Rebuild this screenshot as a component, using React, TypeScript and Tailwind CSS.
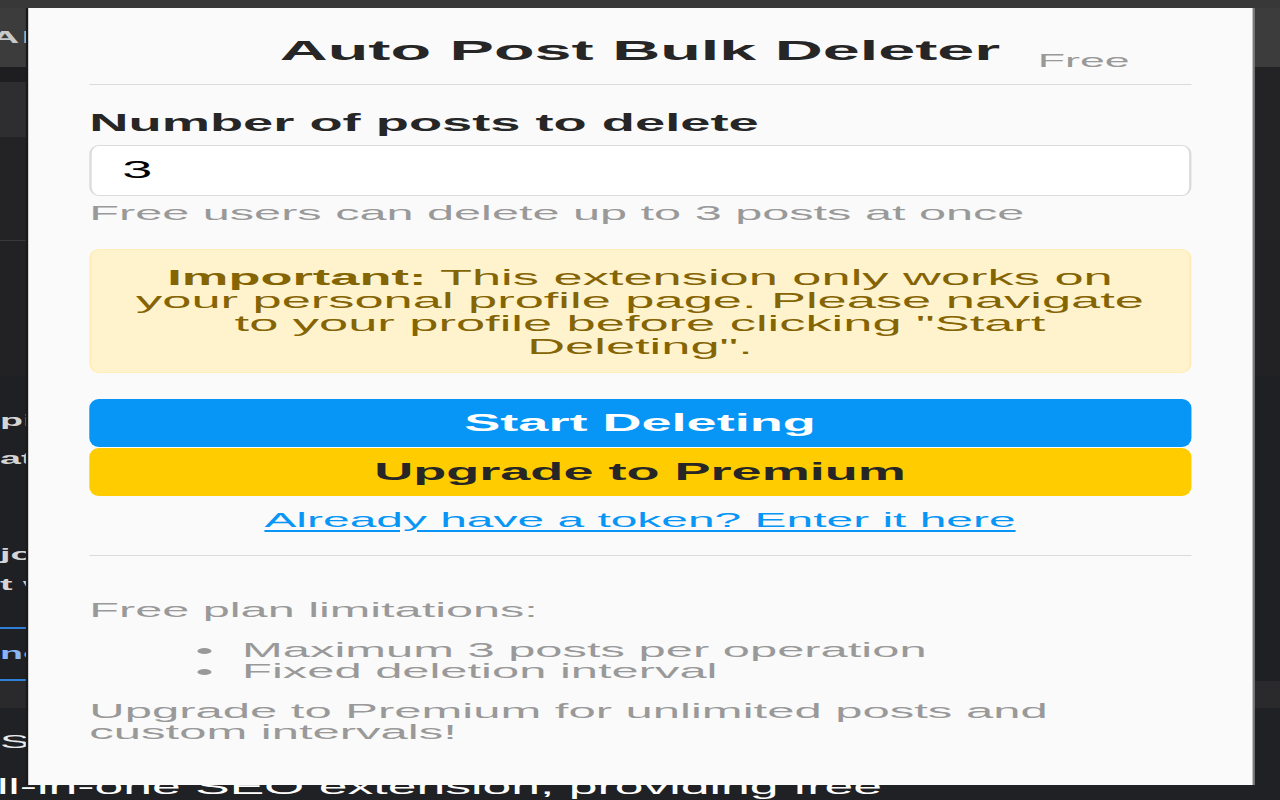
import React from 'react';

// The reference is a popup captured at a stretched aspect ratio, so the whole
// page is laid out at a narrow width and stretched horizontally.
const limits = ['Maximum 3 posts per operation', 'Fixed deletion interval'];

function BackdropPage() {
  return (
    <div className="flex h-[800px] flex-col bg-[#202124] text-[#e8eaed]">
      <div className="h-[8px] bg-[#383838]" />
      <div className="flex h-[60px] items-center bg-[#3c3c3c] text-[17px] font-bold tracking-[1px] text-[#c9c9c9]">
        <span className="-ml-[4px]">AP</span>
      </div>
      <div className="flex h-[70px] bg-[#232326]">
        <div className="w-[200px] bg-[#1e1e20] pt-[15px]">
          <div className="h-[55px] bg-[#2e2e30]" />
        </div>
      </div>
      <div className="h-[105px] bg-[#232326]">
        <div className="h-full w-[200px] border-b border-[#3a3a3c]" />
      </div>
      <div className="h-[136px] bg-[#222225]" />
      <div className="flex h-[253px] flex-col bg-[#1f2023] pt-[26px] text-[16px] font-bold leading-[38px] text-[#d5d5d5]">
        <span>pinned</span>
        <span>at the</span>
        <span className="mt-[58px]">jobs</span>
        <span className="-mt-[8px]">t with</span>
      </div>
      <div className="h-[55px] bg-[#1f2023]">
        <div className="flex h-full w-[200px] items-center border-y-2 border-[#2f7fd6] text-[16px] font-bold text-[#8ab4f8]">
          <span>nc</span>
        </div>
      </div>
      <div className="h-[27px] bg-[#2a2a2c]" />
      <div className="flex h-[70px] items-center bg-[#202124] text-[19px] text-[#e8eaed]">
        <span>SEO</span>
      </div>
      <div className="-mt-[3px] text-[22px] leading-[26px] whitespace-nowrap text-white">
        <span className="-ml-[16px]">All-in-one SEO extension, providing free</span>
      </div>
    </div>
  );
}

function Popup() {
  return (
    <div className="absolute top-[8px] left-[11.5px] flex h-[777px] w-[521.7px] flex-col bg-[#fafafa] px-[26.5px] pt-[26px] shadow-[1px_0_0_#7a7a7a,-1px_0_0_#1a1a1a]">
      <div className="relative border-b border-[#dbdbdb] pb-[18px]">
        <h1 className="text-center text-[28.3px] leading-[32px] font-bold text-[#262626]">Auto Post Bulk Deleter</h1>
        <span className="absolute top-[17px] right-[26px] text-[19px] leading-[19px] text-[#999999]">Free</span>
      </div>

      <label className="mt-[25px] block text-[23.1px] leading-[27px] font-bold text-[#262626]">Number of posts to delete</label>
      <input
        className="mt-[8px] h-[51px] w-full rounded-[4px/9px] border border-[#dbdbdb] bg-white pl-[13px] text-[23px] text-black outline-none"
        defaultValue="3"
        type="text"
      />
      <p className="mt-[5px] text-[20.7px] leading-[24px] text-[#999999]">Free users can delete up to 3 posts at once</p>

      <div className="mt-[24px] rounded-[4px/9px] border border-[#ffeeba] bg-[#fff3cd] pt-[16px] pb-[14px] text-center text-[22.3px] leading-[23px] text-[#856404]">
        <strong>Important:</strong> This extension only works on
        <br />
        your personal profile page. Please navigate
        <br />
        to your profile before clicking &quot;Start
        <br />
        Deleting&quot;.
      </div>

      <button className="mt-[26px] h-[48px] w-full rounded-[4px/9px] bg-[#0796f6] text-[23px] font-bold text-white">
        Start Deleting
      </button>
      <button className="mt-[1px] h-[48px] w-full rounded-[4px/9px] bg-[#ffcc00] text-[23px] font-bold text-[#262626]">
        Upgrade to Premium
      </button>
      <a className="mt-[12px] block text-center text-[20.4px] leading-[24px] text-[#0796f6] underline underline-offset-[3px]" href="#">
        Already have a token? Enter it here
      </a>

      <div className="mt-[23px] border-t border-[#dbdbdb]" />

      <p className="mt-[42px] text-[20.7px] leading-[24px] text-[#999999]">Free plan limitations:</p>
      <ul className="mt-[17px] list-disc pl-[65px] text-[20.8px] leading-[21px] text-[#999999]">
        {limits.map((item) => (
          <li key={item}>{item}</li>
        ))}
      </ul>
      <p className="mt-[19px] text-[20.85px] leading-[21px] text-[#999999]">
        Upgrade to Premium for unlimited posts and
        <br />
        custom intervals!
      </p>
    </div>
  );
}

export default function App() {
  return (
    <div className="h-[800px] w-full overflow-hidden bg-[#202124] font-['Liberation_Sans',Arial,sans-serif]">
      <div className="relative h-[800px] w-[544.68px] origin-top-left scale-x-[2.35]">
        <BackdropPage />
        <Popup />
      </div>
    </div>
  );
}
